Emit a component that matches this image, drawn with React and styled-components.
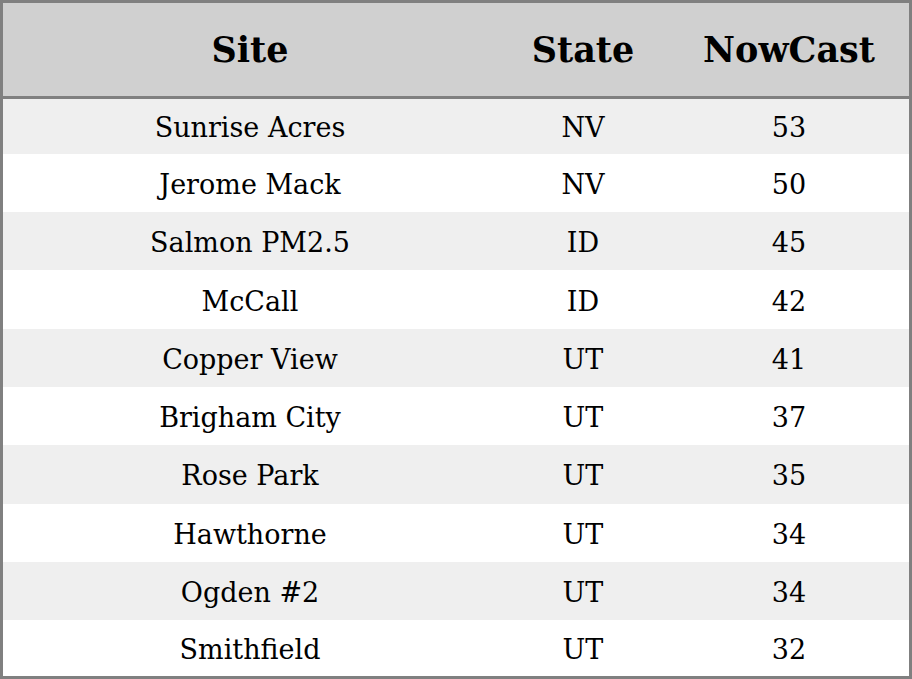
import React from 'react';
import styled, { createGlobalStyle } from 'styled-components';

const GlobalStyle = createGlobalStyle`
  html, body, #root {
    margin: 0;
    height: 100%;
  }
  body {
    background: #ffffff;
    font-family: "DejaVu Serif", serif;
  }
`;

const Table = styled.table`
  width: 100%;
  height: 100%;
  border-collapse: collapse;
  border: 3px solid #808080;
  box-sizing: border-box;
  font-family: "DejaVu Serif", serif;
  color: #000;
`;

const HeadCell = styled.th`
  background: #d0d0d0;
  font-size: 35px;
  font-weight: bold;
  height: 93px;
  padding: 0;
  text-align: center;
  border-bottom: 3px solid #808080;
  width: ${props => props.width}px;
`;

const Row = styled.tr`
  background: ${props => (props.striped ? '#efefef' : '#ffffff')};
  height: 58px;

  &:first-child {
    height: 56px;
  }
  &:last-child {
    height: 57px;
  }
`;

const Cell = styled.td`
  font-size: 27px;
  text-align: center;
  padding: 3px 0 0;
`;

const rows = [
  ['Sunrise Acres', 'NV', 53],
  ['Jerome Mack', 'NV', 50],
  ['Salmon PM2.5', 'ID', 45],
  ['McCall', 'ID', 42],
  ['Copper View', 'UT', 41],
  ['Brigham City', 'UT', 37],
  ['Rose Park', 'UT', 35],
  ['Hawthorne', 'UT', 34],
  ['Ogden #2', 'UT', 34],
  ['Smithfield', 'UT', 32],
];

export default function App() {
  return (
    <>
      <GlobalStyle />
      <Table>
        <thead>
          <tr>
            <HeadCell width={494}>Site</HeadCell>
            <HeadCell width={172}>State</HeadCell>
            <HeadCell width={240}>NowCast</HeadCell>
          </tr>
        </thead>
        <tbody>
          {rows.map((r, i) => (
            <Row key={r[0]} striped={i % 2 === 0}>
              <Cell>{r[0]}</Cell>
              <Cell>{r[1]}</Cell>
              <Cell>{r[2]}</Cell>
            </Row>
          ))}
        </tbody>
      </Table>
    </>
  );
}
